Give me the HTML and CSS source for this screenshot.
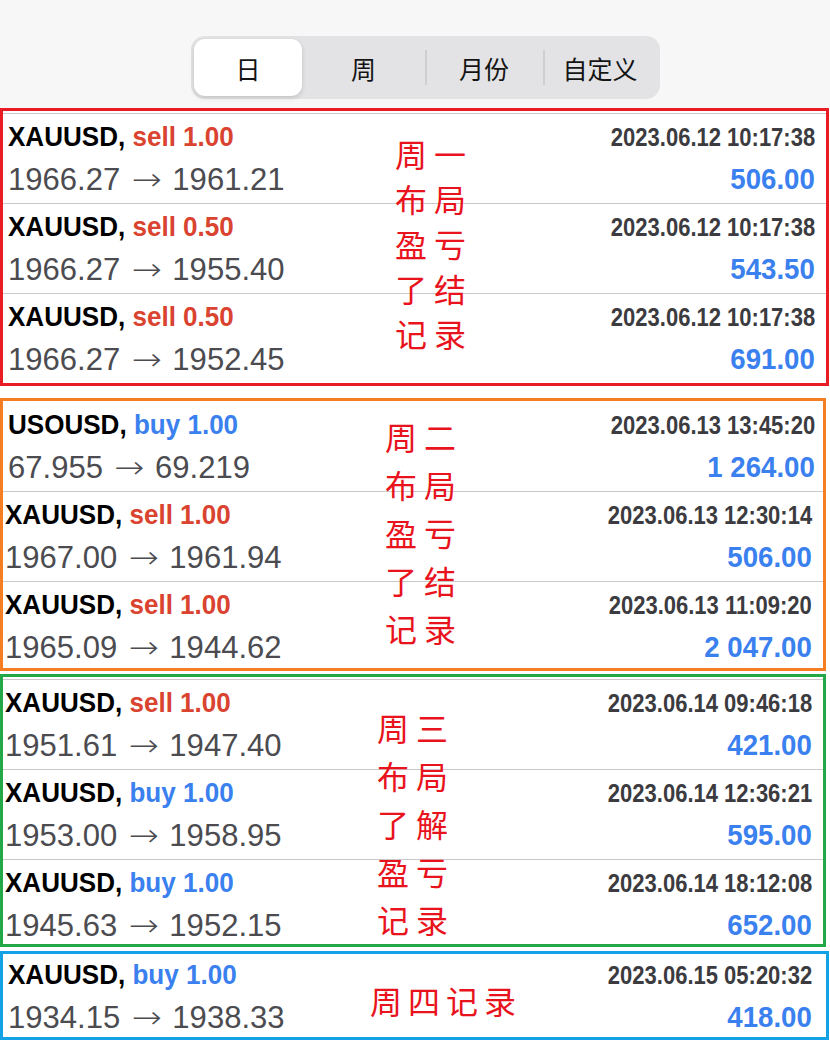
FILE: index.html
```html
<!DOCTYPE html>
<html lang="zh">
<head>
<meta charset="utf-8">
<link rel="stylesheet" href="styles.css">
</head>
<body>
<div class="top">
  <div class="tabs">
    <div class="tab active">日</div>
    <div class="tab t2">周</div>
    <div class="tab t3 sep">月份</div>
    <div class="tab t4 sep">自定义</div>
  </div>
</div>

<div class="box red">
  <div class="row first-line">
    <div class="left"><div class="l1"><span class="sym">XAUUSD,</span> <span class="sell">sell 1.00</span></div><div class="l2">1966.27 <span class="arr">→</span> 1961.21</div></div>
    <div class="right"><div class="date">2023.06.12 10:17:38</div><div class="profit">506.00</div></div>
  </div>
  <div class="row">
    <div class="left"><div class="l1"><span class="sym">XAUUSD,</span> <span class="sell">sell 0.50</span></div><div class="l2">1966.27 <span class="arr">→</span> 1955.40</div></div>
    <div class="right"><div class="date">2023.06.12 10:17:38</div><div class="profit">543.50</div></div>
  </div>
  <div class="row">
    <div class="left"><div class="l1"><span class="sym">XAUUSD,</span> <span class="sell">sell 0.50</span></div><div class="l2">1966.27 <span class="arr">→</span> 1952.45</div></div>
    <div class="right"><div class="date">2023.06.12 10:17:38</div><div class="profit">691.00</div></div>
  </div>
  <div class="note note-red"><span>周一</span><span>布局</span><span>盈亏</span><span>了结</span><span>记录</span></div>
</div>

<div class="box orange">
  <div class="row no-line o1">
    <div class="left"><div class="l1"><span class="sym">USOUSD,</span> <span class="buy">buy 1.00</span></div><div class="l2">67.955 <span class="arr">→</span> 69.219</div></div>
    <div class="right"><div class="date">2023.06.13 13:45:20</div><div class="profit">1 264.00</div></div>
  </div>
  <div class="row">
    <div class="left"><div class="l1"><span class="sym">XAUUSD,</span> <span class="sell">sell 1.00</span></div><div class="l2">1967.00 <span class="arr">→</span> 1961.94</div></div>
    <div class="right"><div class="date">2023.06.13 12:30:14</div><div class="profit">506.00</div></div>
  </div>
  <div class="row">
    <div class="left"><div class="l1"><span class="sym">XAUUSD,</span> <span class="sell">sell 1.00</span></div><div class="l2">1965.09 <span class="arr">→</span> 1944.62</div></div>
    <div class="right"><div class="date">2023.06.13 11:09:20</div><div class="profit">2 047.00</div></div>
  </div>
  <div class="note note-orange"><span>周二</span><span>布局</span><span>盈亏</span><span>了结</span><span>记录</span></div>
</div>

<div class="box green">
  <div class="row">
    <div class="left"><div class="l1"><span class="sym">XAUUSD,</span> <span class="sell">sell 1.00</span></div><div class="l2">1951.61 <span class="arr">→</span> 1947.40</div></div>
    <div class="right"><div class="date">2023.06.14 09:46:18</div><div class="profit">421.00</div></div>
  </div>
  <div class="row">
    <div class="left"><div class="l1"><span class="sym">XAUUSD,</span> <span class="buy">buy 1.00</span></div><div class="l2">1953.00 <span class="arr">→</span> 1958.95</div></div>
    <div class="right"><div class="date">2023.06.14 12:36:21</div><div class="profit">595.00</div></div>
  </div>
  <div class="row">
    <div class="left"><div class="l1"><span class="sym">XAUUSD,</span> <span class="buy">buy 1.00</span></div><div class="l2">1945.63 <span class="arr">→</span> 1952.15</div></div>
    <div class="right"><div class="date">2023.06.14 18:12:08</div><div class="profit">652.00</div></div>
  </div>
  <div class="note note-green"><span>周三</span><span>布局</span><span>了解</span><span>盈亏</span><span>记录</span></div>
</div>

<div class="box blue">
  <div class="row no-line">
    <div class="left"><div class="l1"><span class="sym">XAUUSD,</span> <span class="buy">buy 1.00</span></div><div class="l2">1934.15 <span class="arr">→</span> 1938.33</div></div>
    <div class="right"><div class="date">2023.06.15 05:20:32</div><div class="profit">418.00</div></div>
  </div>
  <div class="note note-blue"><span>周四记录</span></div>
</div>
</body>
</html>
```

FILE: styles.css
```css
html, body {
  margin: 0;
  padding: 0;
  background: #ffffff;
}
body {
  width: 830px;
  font-family: "Liberation Sans", Arial, "Noto Sans CJK SC", sans-serif;
}

.top {
  height: 108px;
  background: #f7f7f7;
  box-sizing: border-box;
  padding: 36px 0 0 191px;
}
.tabs {
  width: 469px;
  height: 63px;
  box-sizing: border-box;
  padding: 3px;
  background: #e3e3e5;
  border-radius: 14px;
  display: flex;
}
.tab {
  display: flex;
  align-items: center;
  justify-content: center;
  font-family: "Noto Sans CJK SC", sans-serif;
  font-size: 25px;
  color: #141414;
  position: relative;
}
.tab.active {
  flex: 0 0 108px;
  background: #ffffff;
  border-radius: 11px;
  box-shadow: 0 2px 5px rgba(0, 0, 0, 0.14);
}
.tab.t2 { flex: 0 0 123px; }
.tab.t3 { flex: 0 0 118px; }
.tab.t4 { flex: 1; }
.tab.sep::before {
  content: "";
  position: absolute;
  left: 0;
  top: 11px;
  bottom: 11px;
  width: 2px;
  background: #cfcfd2;
}

.box {
  position: relative;
  overflow: hidden;
  box-sizing: border-box;
  border: 3px solid;
}
.red {
  width: 829px;
  height: 278px;
  border-color: #e91c25;
  padding-top: 2px;
}
.orange {
  width: 826px;
  height: 273px;
  margin-top: 12px;
  border-color: #f57d22;
}
.green {
  width: 826px;
  height: 273px;
  margin-top: 3px;
  border-color: #22a847;
  padding-top: 2px;
}
.blue {
  width: 829px;
  height: 89px;
  margin-top: 4px;
  border-color: #14a2e6;
}

.row {
  height: 90px;
  box-sizing: border-box;
  border-top: 1px solid #c9c9cb;
  padding: 2px 11px 0 5px;
  display: flex;
  justify-content: space-between;
}
.row.no-line {
  border-top: none;
  padding-top: 3px;
}
.blue .row {
  padding-top: 0;
  padding-right: 14px;
}
.orange .row, .green .row {
  padding-left: 2px;
}
.orange .row.o1 {
  padding-left: 5px;
  padding-right: 8px;
}

.left, .right {
  display: flex;
  flex-direction: column;
}
.right {
  align-items: flex-end;
}
.l1 {
  font-size: 28px;
  font-weight: bold;
  line-height: 42px;
  color: #000000;
  white-space: nowrap;
  transform: scaleX(0.93);
  transform-origin: left center;
}
.sell { color: #d9432f; }
.buy { color: #3a80ef; }
.l2 {
  font-size: 32px;
  line-height: 42px;
  color: #4b4b50;
  white-space: nowrap;
  transform: scaleX(0.97);
  transform-origin: left center;
}
.arr {
  font-family: "DejaVu Sans", sans-serif;
  font-weight: 200;
  font-size: 31px;
  display: inline-block;
  transform: scaleX(1.2);
  margin: 0 5px;
}
.date {
  font-size: 25px;
  font-weight: bold;
  line-height: 42px;
  color: #3b3b40;
  white-space: nowrap;
  transform: scaleX(0.88);
  transform-origin: right center;
}
.profit {
  font-size: 30px;
  font-weight: bold;
  line-height: 42px;
  color: #3a80ef;
  white-space: nowrap;
  transform: scaleX(0.92);
  transform-origin: right center;
}

.note {
  position: absolute;
  display: flex;
  flex-direction: column;
  font-family: "Noto Sans CJK SC", sans-serif;
  font-size: 32px;
  color: #e8131c;
  letter-spacing: 7px;
  white-space: nowrap;
}
.note-red {
  left: 392px;
  top: 20px;
  line-height: 45px;
}
.note-orange {
  left: 382px;
  top: 11px;
  line-height: 48px;
}
.note-green {
  left: 374px;
  top: 26px;
  line-height: 48px;
}
.note-blue {
  left: 367px;
  top: 26px;
  line-height: 40px;
  letter-spacing: 6px;
}
```
